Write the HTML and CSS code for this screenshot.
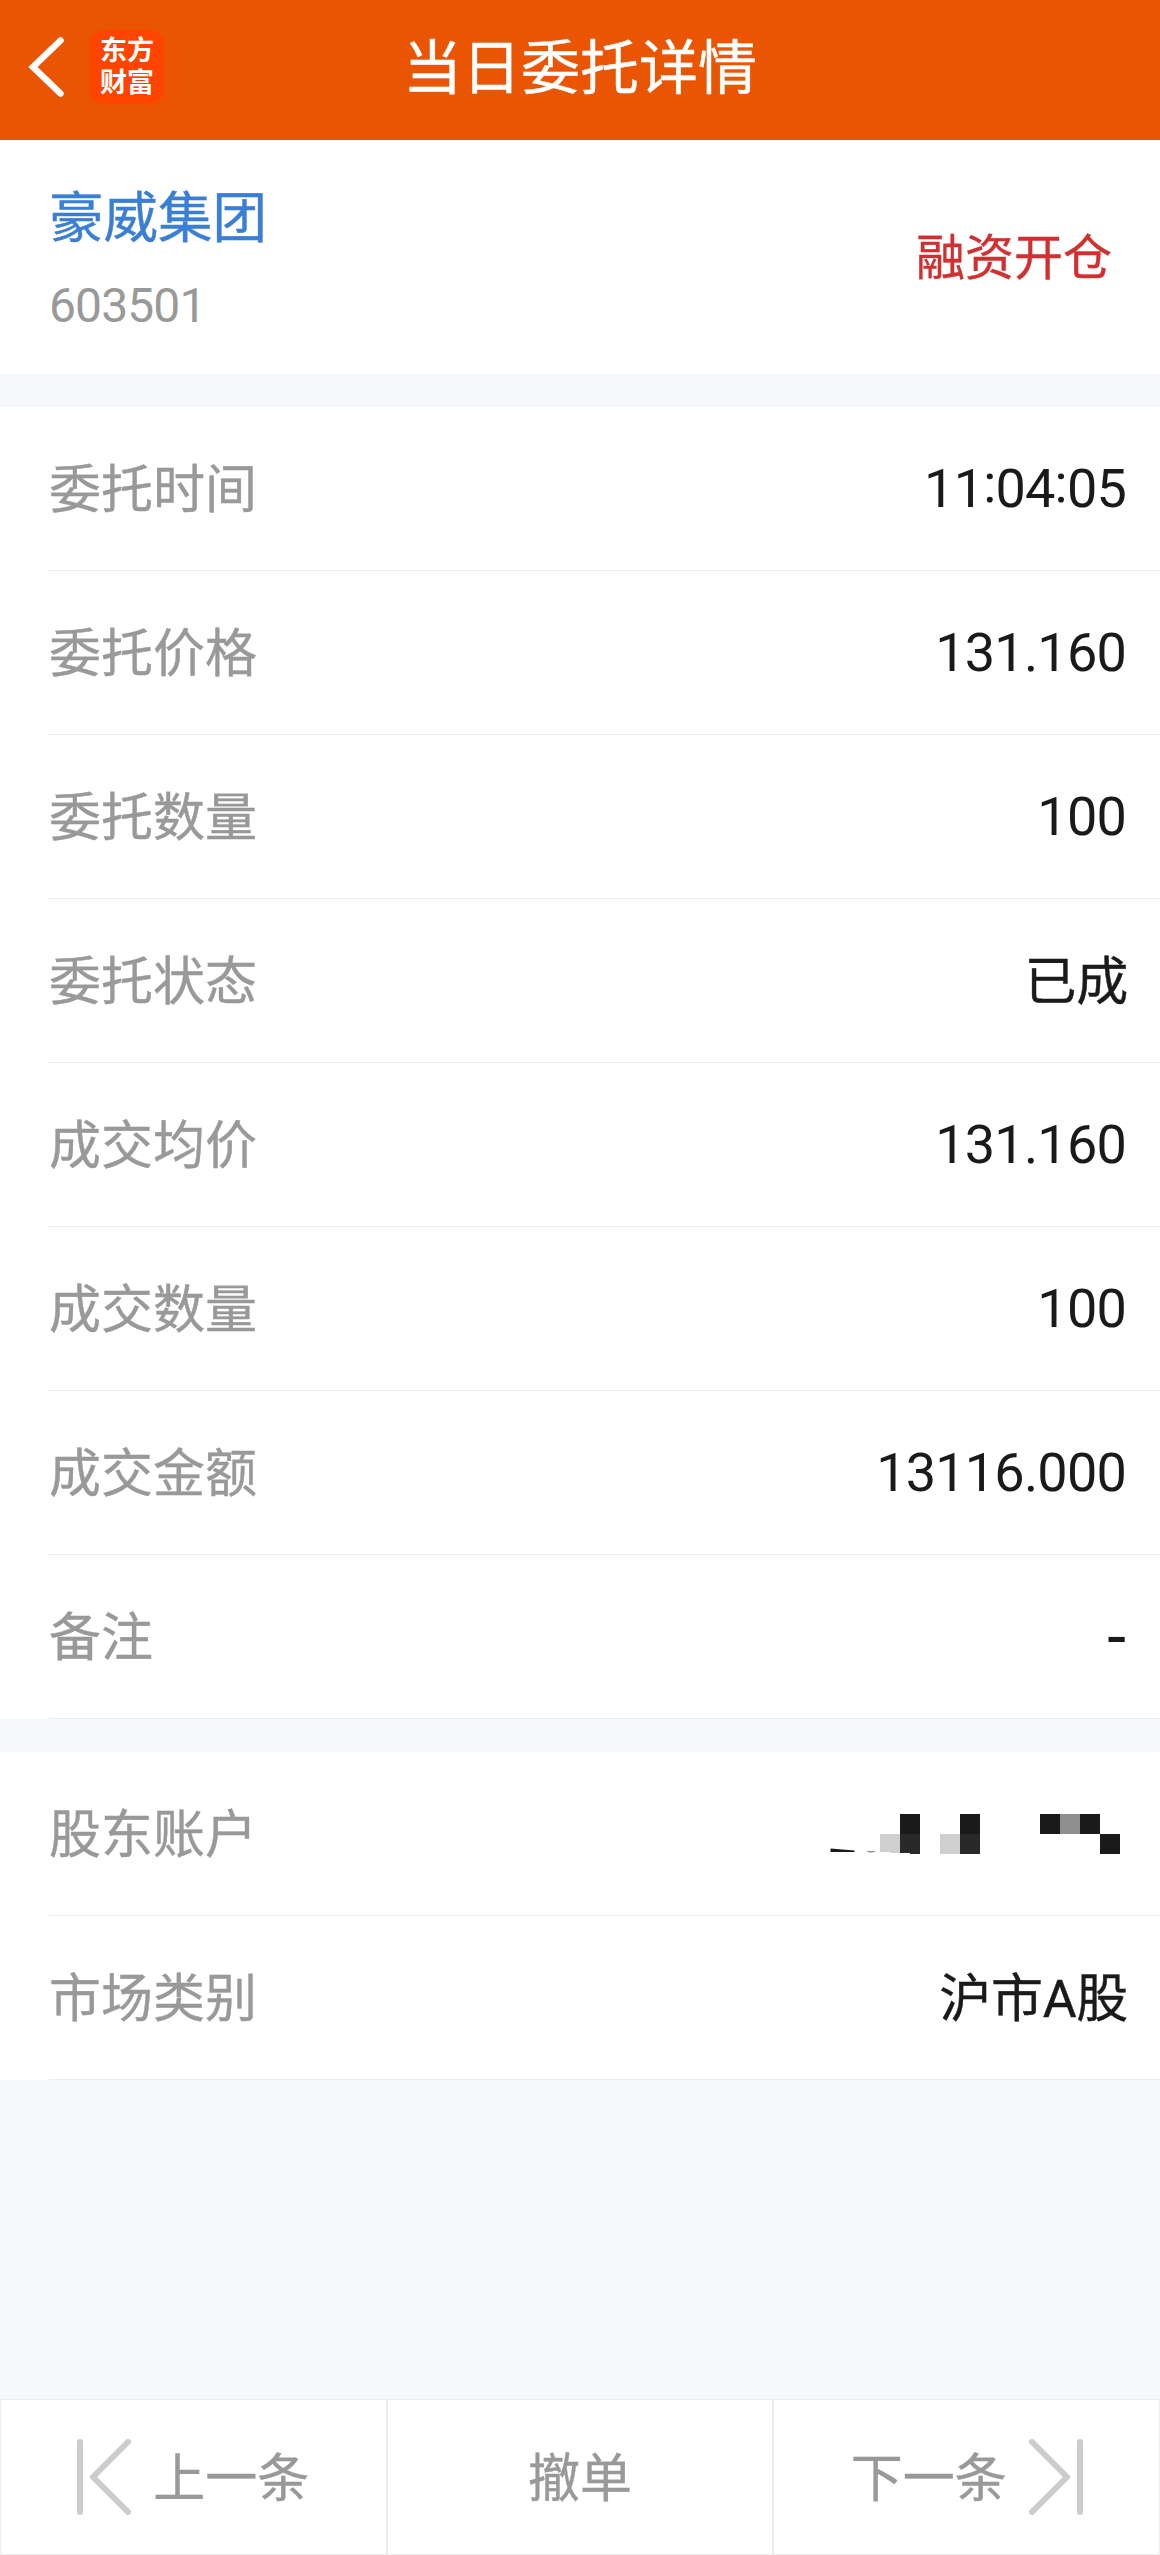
FILE: index.html
```html
<!DOCTYPE html>
<html lang="zh-CN">
<head>
<meta charset="utf-8">
<title>当日委托详情</title>
<link rel="stylesheet" href="styles.css">
</head>
<body>
<header class="topbar">
  <svg class="back" viewBox="0 0 36 60"><path d="M32.500 3.500L5 30L32.500 56.500"/></svg>
  <div class="logo">东方财富</div>
  <h1 class="title">当日委托详情</h1>
</header>
<main class="content">
  <section class="stock">
    <div class="stock-id">
      <div class="stock-name">豪威集团</div>
      <div class="stock-code">603501</div>
    </div>
    <div class="direction">融资开仓</div>
  </section>
  <section class="group">
    <div class="row"><span class="label">委托时间</span><span class="value">11<i class="colon">:</i>04<i class="colon">:</i>05</span></div>
    <div class="row"><span class="label">委托价格</span><span class="value">131.160</span></div>
    <div class="row"><span class="label">委托数量</span><span class="value">100</span></div>
    <div class="row"><span class="label">委托状态</span><span class="value value-text">已成</span></div>
    <div class="row"><span class="label">成交均价</span><span class="value">131.160</span></div>
    <div class="row"><span class="label">成交数量</span><span class="value">100</span></div>
    <div class="row"><span class="label">成交金额</span><span class="value">13116.000</span></div>
    <div class="row"><span class="label">备注</span><span class="value value-empty">-</span></div>
  </section>
  <section class="group">
    <div class="row"><span class="label">股东账户</span>
      <svg class="mosaic" viewBox="0 0 296 40" shape-rendering="crispEdges">
        <path fill="#1a1a1a" d="M76 0h20v20h-20zM136 0h20v20h-20zM216 0h20v20h-20zM256 0h20v20h-20zM276 20h20v20h-20z"/>
        <path fill="#292929" d="M76 20h20v20l-20-1zM136 20h20v20h-20z"/>
        <path fill="#cfcfcf" d="M56 20h20v19l-20-1zM116 20h20v20h-20z"/>
        <path fill="#8f8f8f" d="M236 0h20v20h-20z"/>
        <path fill="#1a1a1a" shape-rendering="auto" d="M6.500 34.500L30.500 36.500V38H6.500z"/>
        <path fill="#8f8f8f" shape-rendering="auto" d="M42 37h10q-5 3-10 0z"/>
      </svg>
    </div>
    <div class="row"><span class="label">市场类别</span><span class="value value-text">沪市<span class="latin">A</span>股</span></div>
  </section>
</main>
<footer class="actions">
  <button class="action"><svg class="step step-prev" viewBox="0 0 54 76"><path d="M3 3V73M51 3L16 38L51 73"/></svg><span class="action-text">上一条</span></button>
  <button class="action"><span class="action-text">撤单</span></button>
  <button class="action"><span class="action-text">下一条</span><svg class="step step-next" viewBox="0 0 54 76"><path d="M51 3V73M3 3L38 38L3 73"/></svg></button>
</footer>
</body>
</html>
```
FILE: styles.css
```css
* { box-sizing: border-box; }

body {
  margin: 0;
  min-height: 2555px;
  display: flex;
  flex-direction: column;
  background: #f7f8fa;
  font-family: "Noto Sans CJK SC", sans-serif;
  color: #1a1a1a;
}

.topbar {
  height: 140px;
  display: grid;
  grid-template-columns: 36px 74px 1fr 191px;
  align-items: center;
  padding: 0 0 6px 28px;
  background: #ea5504;
  color: #fff;
}

.back { width: 36px; height: 60px; fill: none; stroke: #fff; stroke-width: 6.500; stroke-linecap: round; }

.logo {
  width: 74px;
  height: 74px;
  margin-left: 26px;
  padding: 3px 10px 0;
  border-radius: 14px;
  background: #ff4400;
  font-size: 27px;
  font-weight: 700;
  line-height: 32px;
}

.title {
  margin: 0;
  padding: 0 0 6px 53px;
  text-align: center;
  font-size: 59px;
  font-weight: 400;
  line-height: 80px;
  -webkit-text-stroke: 0.400px currentColor;
}

.content { flex: 1; display: flex; flex-direction: column; gap: 33px; }

.stock {
  height: 234px;
  padding: 0 48px 0 49px;
  display: flex;
  align-items: center;
  justify-content: space-between;
  background: #fff;
}

.stock-name { color: #3a7fd5; font-size: 54.500px; line-height: 80px; -webkit-text-stroke: 0.400px currentColor; }
.stock-code { color: #999; font-family: Roboto, sans-serif; font-size: 48px; letter-spacing: -0.900px; line-height: 60px; margin-top: 22px; }
.stock-id { padding-bottom: 4px; }
.direction { color: #d03030; font-size: 49px; line-height: 70px; padding-bottom: 6px; -webkit-text-stroke: 0.400px currentColor; }

.group { background: #fff; }

.row {
  height: 164px;
  margin-left: 49px;
  padding-right: 34px;
  display: flex;
  align-items: center;
  justify-content: space-between;
  border-bottom: 1px solid #ececec;
}

.label { color: #999; font-size: 52px; line-height: 76px; padding-bottom: 6px; -webkit-text-stroke: 0.400px currentColor; }
.value { font-family: Roboto, "Noto Sans CJK SC", sans-serif; font-size: 54px; line-height: 76px; letter-spacing: -0.800px; }
.value-text { font-family: "Noto Sans CJK SC", sans-serif; font-size: 52px; padding-bottom: 5px; margin-right: -2px; letter-spacing: -0.300px; -webkit-text-stroke: 0.400px currentColor; }
.value-empty { font-size: 68px; line-height: 68px; letter-spacing: 0; }
.latin { font-family: Roboto, sans-serif; line-height: 0; }
.colon { font-style: normal; line-height: 0; vertical-align: 5px; }
.mosaic { width: 296px; height: 40px; margin-right: 6px; }

.actions { height: 156px; display: grid; grid-template-columns: repeat(3, 1fr); background: #fff; }

.action {
  border: 1px solid #ececec;
  background: #fff;
  color: #999;
  font: inherit;
  font-size: 52px;
  line-height: 76px;
  padding: 0;
  display: flex;
  align-items: center;
  justify-content: center;
}

.action-text { padding-bottom: 4px; -webkit-text-stroke: 0.400px currentColor; }

.step { width: 54px; height: 76px; fill: none; stroke: #ccc; stroke-width: 6; stroke-linecap: round; stroke-linejoin: round; }
.step-prev { margin-right: 22px; }
.step-next { margin-left: 22px; }
```
